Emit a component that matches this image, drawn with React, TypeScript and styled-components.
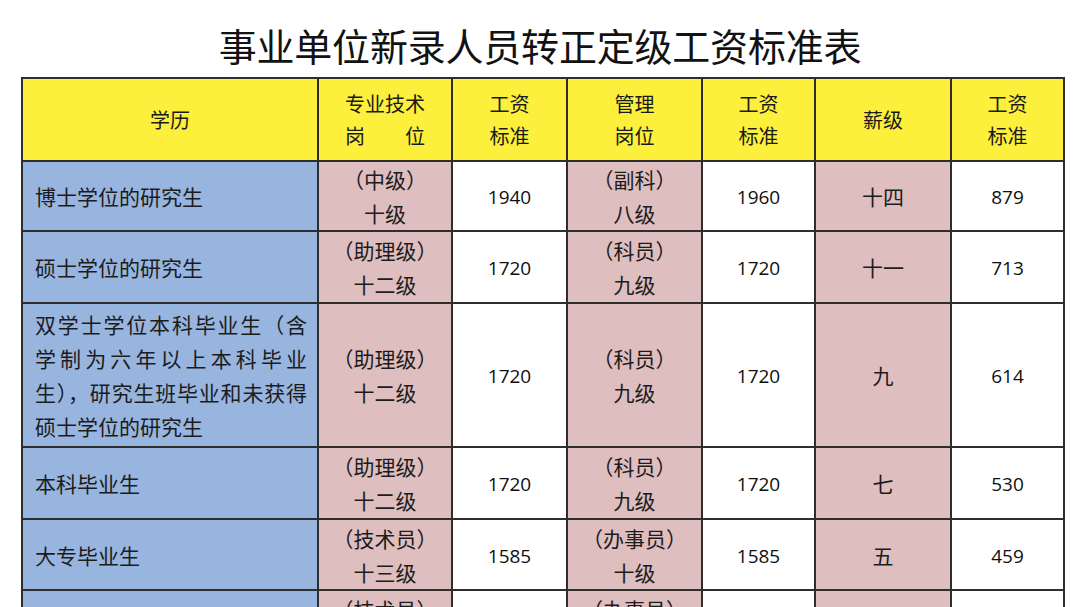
import React from 'react';
import styled, { createGlobalStyle } from 'styled-components';

const GlobalStyle = createGlobalStyle`
  html, body {
    margin: 0;
    padding: 0;
    background: #ffffff;
    height: 607px;
    overflow: hidden;
  }
`;

const Page = styled.div`
  width: 1080px;
  padding: 26px 0 0 21px;
  box-sizing: border-box;
  font-family: 'Noto Sans CJK SC', 'Noto Sans', sans-serif;
  color: #141414;
`;

const Title = styled.h1`
  margin: 0 0 13px -21px;
  height: 38px;
  line-height: 38px;
  font-size: 38px;
  font-weight: 400;
  text-align: center;
  color: #121212;
  letter-spacing: -0.2px;
`;

const Table = styled.table`
  border-collapse: collapse;
  table-layout: fixed;
  width: 1042px;
`;

const HeadCell = styled.th`
  background: #fcf03c;
  border: 2px solid #2e2e2e;
  height: 81px;
  padding: 0;
  font-size: 20px;
  font-weight: 400;
  line-height: 32px;
  text-align: center;
  vertical-align: middle;
  color: #1a1a1a;
`;

type Tone = 'blue' | 'pink' | 'white';

const tones: Record<Tone, string> = {
  blue: '#98b5df',
  pink: '#dfbebf',
  white: '#ffffff',
};

const Cell = styled.td<{ $tone: Tone; $h: number }>`
  background: ${(p) => tones[p.$tone]};
  border: 2px solid #2e2e2e;
  height: ${(p) => p.$h}px;
  padding: 0;
  text-align: center;
  vertical-align: middle;
  font-size: 21px;
  line-height: 34px;
  color: #1c1c1c;
`;

const EduCell = styled(Cell)`
  text-align: left;
  padding: 0 10px 0 12px;
`;

const Line = styled.div<{ $justify?: boolean }>`
  white-space: nowrap;
  text-align: ${(p) => (p.$justify ? 'justify' : 'left')};
  text-align-last: ${(p) => (p.$justify ? 'justify' : 'left')};
`;

const Num = styled.span`
  font-family: 'Open Sans', 'Liberation Sans', sans-serif;
  font-size: 19px;
  line-height: 34px;
  color: #0f0f0f;
`;

type Row = {
  edu: string[];
  tech: [string, string];
  techPay: string;
  mgmt: [string, string];
  mgmtPay: string;
  grade: string;
  gradePay: string;
  h: number;
};

const rows: Row[] = [
  { edu: ['博士学位的研究生'], tech: ['（中级）', '十级'], techPay: '1940', mgmt: ['（副科）', '八级'], mgmtPay: '1960', grade: '十四', gradePay: '879', h: 68 },
  { edu: ['硕士学位的研究生'], tech: ['（助理级）', '十二级'], techPay: '1720', mgmt: ['（科员）', '九级'], mgmtPay: '1720', grade: '十一', gradePay: '713', h: 70 },
  {
    edu: ['双学士学位本科毕业生（含', '学制为六年以上本科毕业', '生），研究生班毕业和未获得', '硕士学位的研究生'],
    tech: ['（助理级）', '十二级'],
    techPay: '1720',
    mgmt: ['（科员）', '九级'],
    mgmtPay: '1720',
    grade: '九',
    gradePay: '614',
    h: 142,
  },
  { edu: ['本科毕业生'], tech: ['（助理级）', '十二级'], techPay: '1720', mgmt: ['（科员）', '九级'], mgmtPay: '1720', grade: '七', gradePay: '530', h: 70 },
  { edu: ['大专毕业生'], tech: ['（技术员）', '十三级'], techPay: '1585', mgmt: ['（办事员）', '十级'], mgmtPay: '1585', grade: '五', gradePay: '459', h: 69 },
  { edu: ['中专毕业生'], tech: ['（技术员）', '十三级'], techPay: '1545', mgmt: ['（办事员）', '十级'], mgmtPay: '1545', grade: '三', gradePay: '396', h: 69 },
];

const colWidths = [296, 134, 115, 135, 113, 136, 113];

const App: React.FC = () => {
  return (
    <Page>
      <GlobalStyle />
      <Title>事业单位新录人员转正定级工资标准表</Title>
      <Table>
        <colgroup>
          {colWidths.map((w, i) => (
            <col key={i} style={{ width: w }} />
          ))}
        </colgroup>
        <thead>
          <tr>
            <HeadCell>学历</HeadCell>
            <HeadCell>专业技术<br />岗　　位</HeadCell>
            <HeadCell>工资<br />标准</HeadCell>
            <HeadCell>管理<br />岗位</HeadCell>
            <HeadCell>工资<br />标准</HeadCell>
            <HeadCell>薪级</HeadCell>
            <HeadCell>工资<br />标准</HeadCell>
          </tr>
        </thead>
        <tbody>
          {rows.map((r, i) => (
            <tr key={i}>
              <EduCell $tone="blue" $h={r.h}>
                {r.edu.map((line, j) => (
                  <Line key={j} $justify={r.edu.length > 1 && j < r.edu.length - 1}>
                    {line}
                  </Line>
                ))}
              </EduCell>
              <Cell $tone="pink" $h={r.h}>
                {r.tech[0]}<br />{r.tech[1]}
              </Cell>
              <Cell $tone="white" $h={r.h}>
                <Num>{r.techPay}</Num>
              </Cell>
              <Cell $tone="pink" $h={r.h}>
                {r.mgmt[0]}<br />{r.mgmt[1]}
              </Cell>
              <Cell $tone="white" $h={r.h}>
                <Num>{r.mgmtPay}</Num>
              </Cell>
              <Cell $tone="pink" $h={r.h}>
                {r.grade}
              </Cell>
              <Cell $tone="white" $h={r.h}>
                <Num>{r.gradePay}</Num>
              </Cell>
            </tr>
          ))}
        </tbody>
      </Table>
    </Page>
  );
};

export default App;
